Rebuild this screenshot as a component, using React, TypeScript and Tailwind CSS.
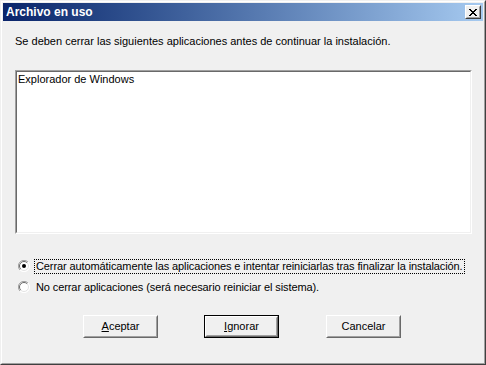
import React from "react";

const font = { fontFamily: '"Liberation Sans", Arial, sans-serif' };

function Radio({ checked }: { checked: boolean }) {
  return (
    <svg width="12" height="12" viewBox="0 0 12 12" className="shrink-0">
      <circle cx="6" cy="6" r="5.5" fill="#ffffff" />
      <path d="M10 2 A5.5 5.5 0 0 0 2 10" fill="none" stroke="#a0a0a0" strokeWidth="1" />
      <path d="M9.2 2.8 A4.5 4.5 0 0 0 2.8 9.2" fill="none" stroke="#696969" strokeWidth="1" />
      <path d="M2 10 A5.5 5.5 0 0 0 10 2" fill="none" stroke="#ffffff" strokeWidth="1" />
      <path d="M2.8 9.2 A4.5 4.5 0 0 0 9.2 2.8" fill="none" stroke="#e3e3e3" strokeWidth="1" />
      {checked && <circle cx="6" cy="6" r="2" fill="#000000" />}
    </svg>
  );
}

function Btn({ children, isDefault }: { children: React.ReactNode; isDefault?: boolean }) {
  const inner = (
    <div className="flex h-full w-full border border-t-white border-l-white border-r-[#696969] border-b-[#696969]">
      <div className="flex h-full w-full items-center justify-center border border-transparent border-r-[#a0a0a0] border-b-[#a0a0a0] text-[11px] leading-[13px] text-black">
        {children}
      </div>
    </div>
  );
  return (
    <div className={`h-[23px] w-[75px] bg-[#f0f0f0] ${isDefault ? "border border-black" : ""}`}>{inner}</div>
  );
}

export default function App() {
  return (
    <div style={font} className="h-[365px] w-[486px] border border-t-[#f0f0f0] border-l-[#f0f0f0] border-r-[#404040] border-b-[#404040] bg-[#f0f0f0]">
      <div className="flex h-full flex-col border border-t-white border-l-white border-r-[#a0a0a0] border-b-[#a0a0a0] p-px">
        {/* title bar */}
        <div className="flex h-[18px] shrink-0 items-center justify-between bg-gradient-to-r from-[#0a246a] to-[#a6caf0] pl-[3px] pr-[2px]">
          <span className="text-[12px] font-bold leading-[14px] text-white">Archivo en uso</span>
          <div className="h-[14px] w-[16px] border border-t-white border-l-white border-r-[#404040] border-b-[#404040] bg-[#f0f0f0]">
            <div className="flex h-full w-full items-center justify-center border border-transparent border-r-[#a0a0a0] border-b-[#a0a0a0]">
              <svg width="8" height="7" viewBox="0 0 8 7" shapeRendering="crispEdges">
                <path d="M0 0h2v1h-2zM6 0h2v1h-2zM1 1h2v1h-2zM5 1h2v1h-2zM2 2h4v1h-4zM3 3h2v1h-2zM2 4h4v1h-4zM1 5h2v1h-2zM5 5h2v1h-2zM0 6h2v1h-2zM6 6h2v1h-2z" fill="#000" />
              </svg>
            </div>
          </div>
        </div>

        {/* content */}
        <div className="flex flex-1 flex-col">
          <p className="ml-[12px] mt-[14px] text-[11px] leading-[13px] text-black">
            Se deben cerrar las siguientes aplicaciones antes de continuar la instalación.
          </p>

          <div className="ml-[12px] mt-[22px] h-[164px] w-[457px] border border-t-[#a0a0a0] border-l-[#a0a0a0] border-r-white border-b-white">
            <div className="h-full w-full border border-t-[#696969] border-l-[#696969] border-r-[#f0f0f0] border-b-[#f0f0f0] bg-white pl-px pt-px">
              <div className="text-[11px] leading-[13px] text-black">Explorador de Windows</div>
            </div>
          </div>

          <div className="ml-[15px] mt-[24px] flex h-[16px] items-center">
            <Radio checked />
            <span className="ml-[4px] border border-dotted border-black px-px text-[11px] leading-[13px] tracking-[-0.1px] text-black">
              Cerrar automáticamente las aplicaciones e intentar reiniciarlas tras finalizar la instalación.
            </span>
          </div>
          <div className="ml-[15px] mt-[5px] flex h-[16px] items-center">
            <Radio checked={false} />
            <span className="ml-[5px] px-px text-[11px] leading-[13px] tracking-[-0.1px] text-black">
              No cerrar aplicaciones (será necesario reiniciar el sistema).
            </span>
          </div>

          <div className="ml-[80px] mt-[20px] flex gap-[46px]">
            <Btn>
              <span className="underline underline-offset-1">A</span>ceptar
            </Btn>
            <Btn isDefault>
              <span className="underline underline-offset-1">I</span>gnorar
            </Btn>
            <div className="ml-px">
              <Btn>Cancelar</Btn>
            </div>
          </div>
        </div>
      </div>
    </div>
  );
}
